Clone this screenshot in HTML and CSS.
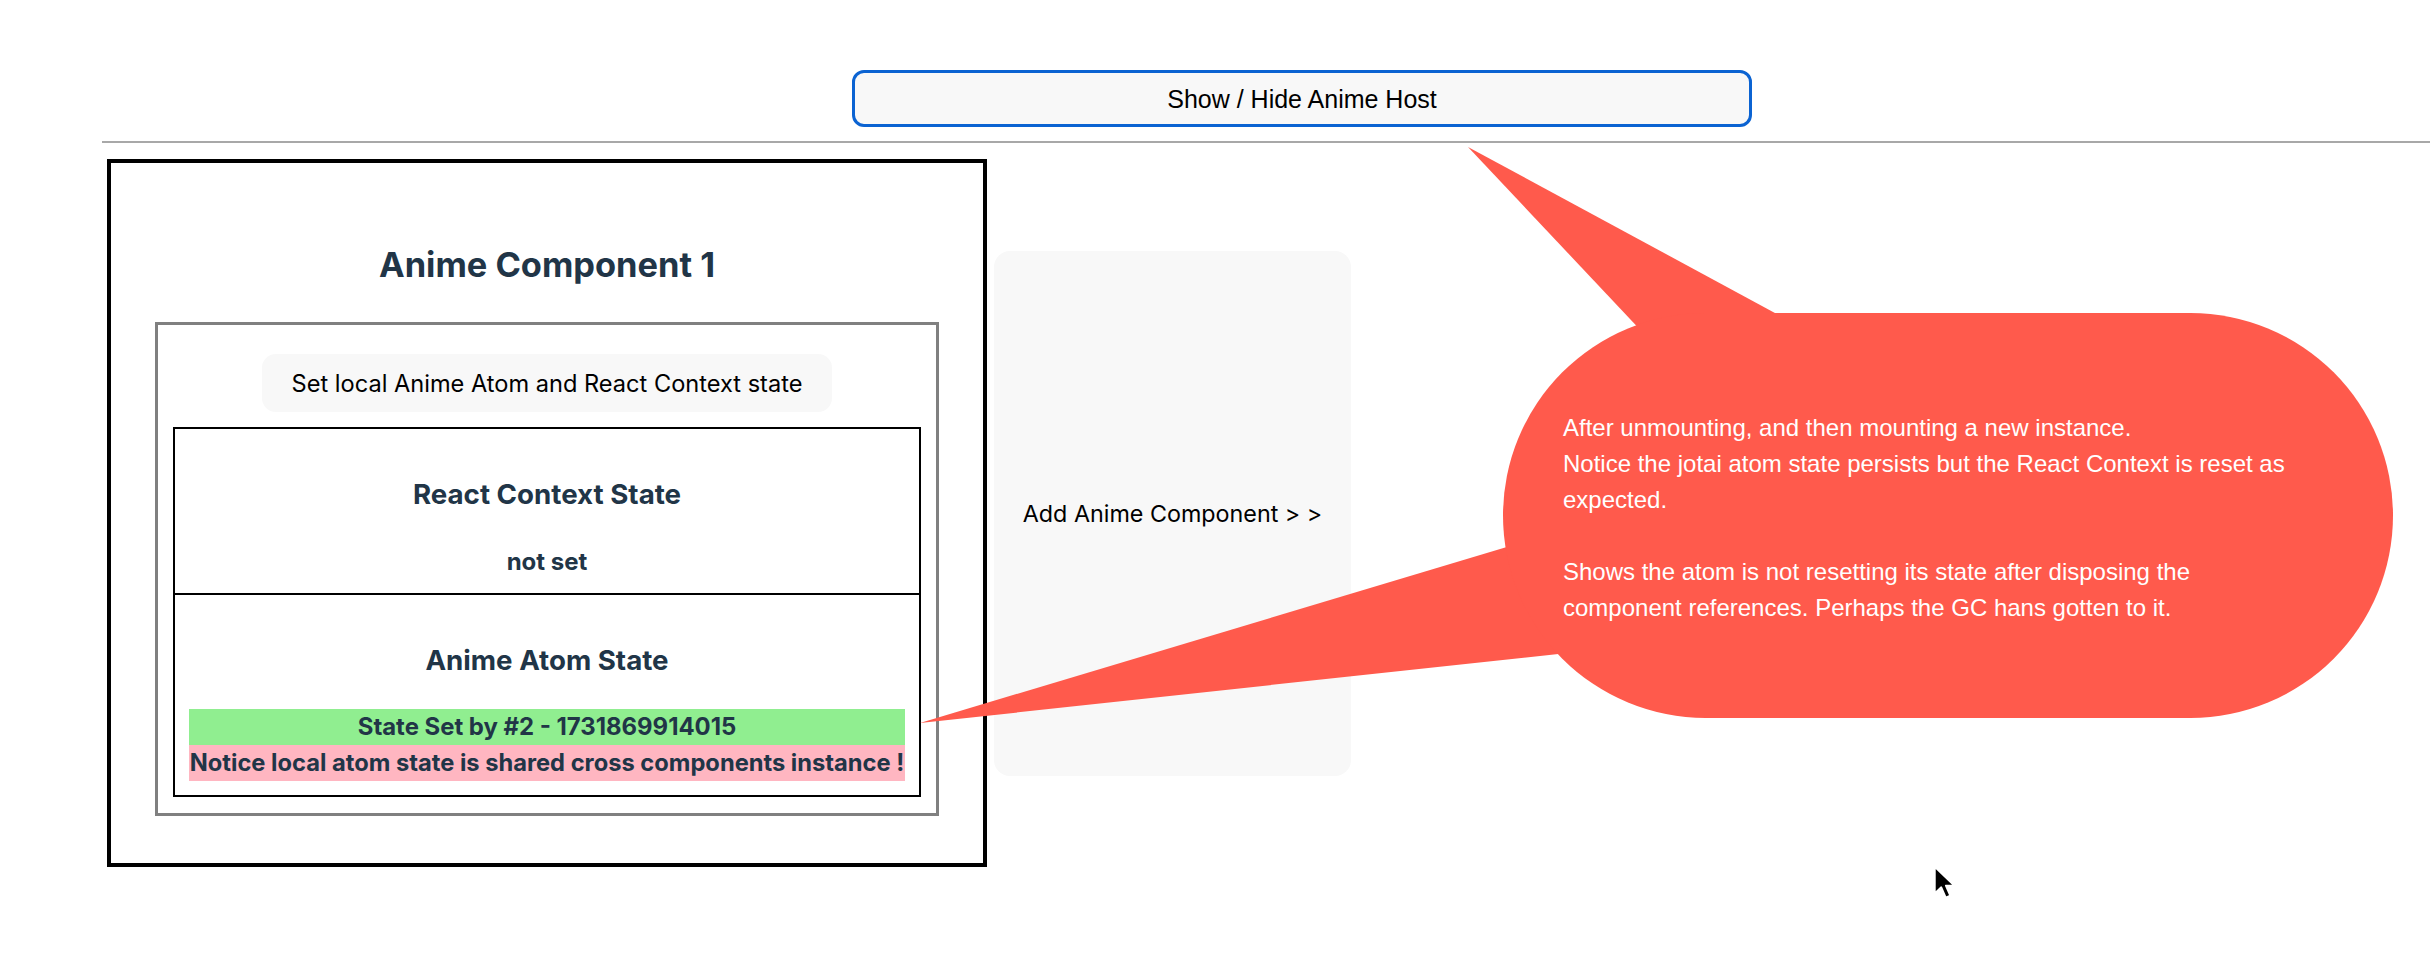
FILE: index.html
```html
<!DOCTYPE html>
<html lang="en">
<head>
<meta charset="utf-8">
<title>Anime Host</title>
<link rel="stylesheet" href="styles.css">
</head>
<body>
<div class="page">
  <div class="top">
    <button class="toggle">Show / Hide Anime Host</button>
  </div>
  <hr class="rule">
  <div class="row">
    <section class="anime">
      <h3 class="anime-title">Anime Component 1</h3>
      <div class="host">
        <button class="set-btn">Set local Anime Atom and React Context state</button>
        <div class="state-box context">
          <h4 class="state-title">React Context State</h4>
          <div class="state-value">not set</div>
        </div>
        <div class="state-box atom">
          <h4 class="state-title">Anime Atom State</h4>
          <div class="bar green">State Set by #2 - 1731869914015</div>
          <div class="bar pink">Notice local atom state is shared cross components instance !</div>
        </div>
      </div>
    </section>
    <button class="add-btn">Add Anime Component &gt; &gt;</button>
  </div>

  <svg class="tails" width="2430" height="962" viewBox="0 0 2430 962" aria-hidden="true">
    <polygon points="1468,147 1744,440 2010,440" fill="#ff5a4c"/>
    <polygon points="920,723 1650,504 1650,644" fill="#ff5a4c"/>
  </svg>
  <div class="bubble">
    <p class="bubble-text">After unmounting, and then mounting a new instance.<br>Notice the jotai atom state persists but the React Context is reset as expected.<br><br>Shows the atom is not resetting its state after disposing the<br>component references. Perhaps the GC hans gotten to it.</p>
  </div>

  <svg class="cursor" width="26" height="38" viewBox="0 0 22 32" aria-hidden="true">
    <path d="M1.5 1.5 L1.5 24 L7 18.8 L10.8 27.5 L14.6 25.9 L10.9 17.4 L18 17.4 Z" fill="#000" stroke="#fff" stroke-width="1.6" stroke-linejoin="round"/>
  </svg>
</div>
</body>
</html>
```

FILE: styles.css
```css
html, body {
  margin: 0;
  padding: 0;
  overflow: hidden;
  background: #ffffff;
}

.page {
  position: relative;
  width: 2430px;
  height: 962px;
  font-family: Inter, "Noto Sans", sans-serif;
  color: #213547;
}

.top {
  padding: 70px 0 0 852px;
}

.toggle {
  display: block;
  box-sizing: border-box;
  width: 900px;
  height: 57px;
  margin: 0;
  padding: 2px 0 0;
  border: 3px solid #0b63d2;
  border-radius: 12px;
  background: #f8f8f8;
  color: #000;
  font-family: "Liberation Sans", Arial, sans-serif;
  font-size: 25px;
}

.rule {
  margin: 14px 0 0 102px;
  border: 0;
  border-top: 2px solid #a8a8a8;
  height: 0;
}

.row {
  display: flex;
  align-items: center;
  gap: 7px;
  margin: 16px 0 0 107px;
}

.anime {
  box-sizing: border-box;
  width: 880px;
  border: 4px solid #000;
  padding: 80px 44px 47px;
}

.anime-title {
  margin: 0 0 35px;
  text-align: center;
  font-size: 34.4px;
  line-height: 44px;
  font-weight: 700;
}

.host {
  border: 3px solid #808080;
  padding: 29px 15px 16px;
  display: flex;
  flex-direction: column;
  align-items: stretch;
}

.set-btn {
  align-self: center;
  box-sizing: border-box;
  height: 58px;
  width: 570px;
  margin: 0 0 15px;
  padding: 0;
  border: 0;
  border-radius: 14px;
  background: #f8f8f8;
  color: #000;
  font-family: Inter, "Noto Sans", sans-serif;
  font-size: 23.6px;
}

.state-box {
  border: 2px solid #000;
  padding: 14px;
  text-align: center;
  font-weight: 700;
}

.state-box.context {
  padding-bottom: 13px;
}

.state-box.atom {
  border-top: 0;
}

.state-title {
  margin: 33px 0 32px;
  font-size: 27.7px;
  line-height: 36px;
  font-weight: 700;
}

.atom .state-title {
  margin: 33px 0 31px;
}

.state-value {
  font-size: 24px;
  line-height: 36px;
}

.bar {
  font-size: 23.9px;
  line-height: 36px;
  white-space: nowrap;
}

.green {
  background: #90ee90;
}

.pink {
  background: #ffb6c1;
  font-size: 23.7px;
}

.add-btn {
  box-sizing: border-box;
  width: 357px;
  height: 525px;
  margin: 0;
  padding: 0;
  border: 0;
  border-radius: 16px;
  background: #f8f8f8;
  color: #000;
  font-family: Inter, "Noto Sans", sans-serif;
  font-size: 23.3px;
}

.tails {
  position: absolute;
  left: 0;
  top: 0;
  pointer-events: none;
}

.bubble {
  position: absolute;
  left: 1503px;
  top: 313px;
  box-sizing: border-box;
  width: 890px;
  height: 405px;
  padding: 97px 60px 0 60px;
  border-radius: 203px;
  background: #ff5a4c;
}

.bubble-text {
  margin: 0;
  color: #fff;
  font-family: "Liberation Sans", Arial, sans-serif;
  font-size: 24px;
  line-height: 36px;
}

.cursor {
  position: absolute;
  left: 1933px;
  top: 865px;
}
```
